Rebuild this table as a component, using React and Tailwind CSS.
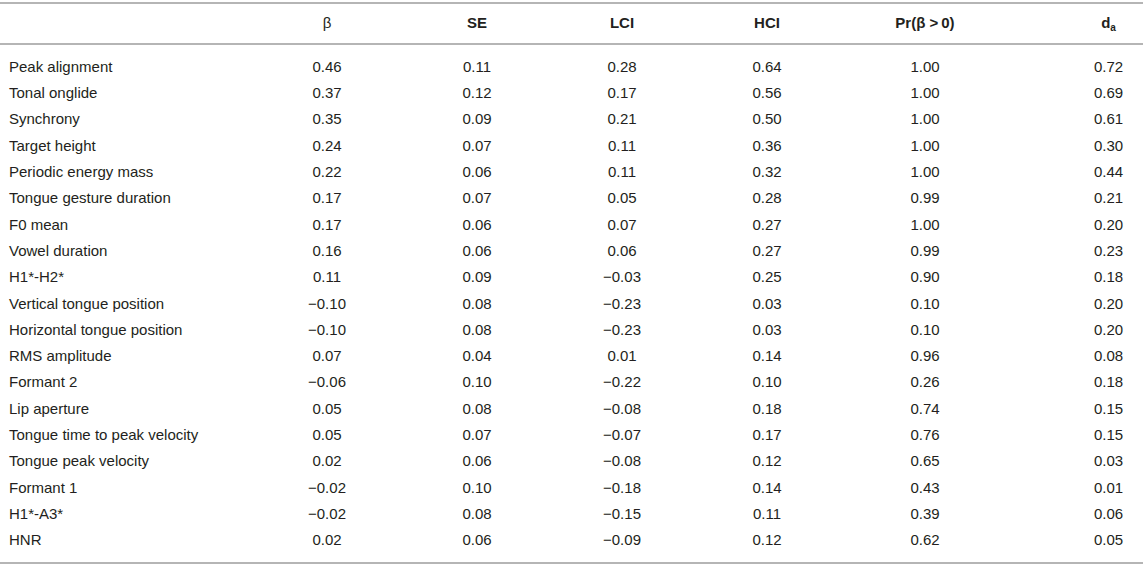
const rows = [
  ['Peak alignment', '0.46', '0.11', '0.28', '0.64', '1.00', '0.72'],
  ['Tonal onglide', '0.37', '0.12', '0.17', '0.56', '1.00', '0.69'],
  ['Synchrony', '0.35', '0.09', '0.21', '0.50', '1.00', '0.61'],
  ['Target height', '0.24', '0.07', '0.11', '0.36', '1.00', '0.30'],
  ['Periodic energy mass', '0.22', '0.06', '0.11', '0.32', '1.00', '0.44'],
  ['Tongue gesture duration', '0.17', '0.07', '0.05', '0.28', '0.99', '0.21'],
  ['F0 mean', '0.17', '0.06', '0.07', '0.27', '1.00', '0.20'],
  ['Vowel duration', '0.16', '0.06', '0.06', '0.27', '0.99', '0.23'],
  ['H1*-H2*', '0.11', '0.09', '−0.03', '0.25', '0.90', '0.18'],
  ['Vertical tongue position', '−0.10', '0.08', '−0.23', '0.03', '0.10', '0.20'],
  ['Horizontal tongue position', '−0.10', '0.08', '−0.23', '0.03', '0.10', '0.20'],
  ['RMS amplitude', '0.07', '0.04', '0.01', '0.14', '0.96', '0.08'],
  ['Formant 2', '−0.06', '0.10', '−0.22', '0.10', '0.26', '0.18'],
  ['Lip aperture', '0.05', '0.08', '−0.08', '0.18', '0.74', '0.15'],
  ['Tongue time to peak velocity', '0.05', '0.07', '−0.07', '0.17', '0.76', '0.15'],
  ['Tongue peak velocity', '0.02', '0.06', '−0.08', '0.12', '0.65', '0.03'],
  ['Formant 1', '−0.02', '0.10', '−0.18', '0.14', '0.43', '0.01'],
  ['H1*-A3*', '−0.02', '0.08', '−0.15', '0.11', '0.39', '0.06'],
  ['HNR', '0.02', '0.06', '−0.09', '0.12', '0.62', '0.05'],
];

const cols = 'grid grid-cols-[250px_154px_146px_144px_146px_170px_1fr]';

export default function App() {
  return (
    <div className="w-[1143px] h-[566px] bg-white pt-[2px] text-[15px] text-[#231f20] font-['Liberation_Sans',Arial,sans-serif]">
      {/* header */}
      <div className={`${cols} h-[43px] items-center border-y-2 border-[#b5b5b5] font-bold`}>
        <div />
        <div className="text-center font-normal">β</div>
        <div className="text-center">SE</div>
        <div className="text-center">LCI</div>
        <div className="text-center">HCI</div>
        <div className="text-center">Pr(β &gt;&#8201;0)</div>
        <div className="text-center pl-[64px]">
          d<sub className="text-[10px] align-baseline relative top-[3px]">a</sub>
        </div>
      </div>

      {/* body */}
      <div className="pt-[9px] pb-[8px] border-b-2 border-[#b5b5b5]">
        {rows.map((r) => (
          <div key={r[0]} className={`${cols} h-[26.3px] items-center`}>
            <div className="pl-[9px] whitespace-nowrap">{r[0]}</div>
            <div className="text-center">{r[1]}</div>
            <div className="text-center">{r[2]}</div>
            <div className="text-center">{r[3]}</div>
            <div className="text-center">{r[4]}</div>
            <div className="text-center">{r[5]}</div>
            <div className="text-center pl-[64px]">{r[6]}</div>
          </div>
        ))}
      </div>
    </div>
  );
}
